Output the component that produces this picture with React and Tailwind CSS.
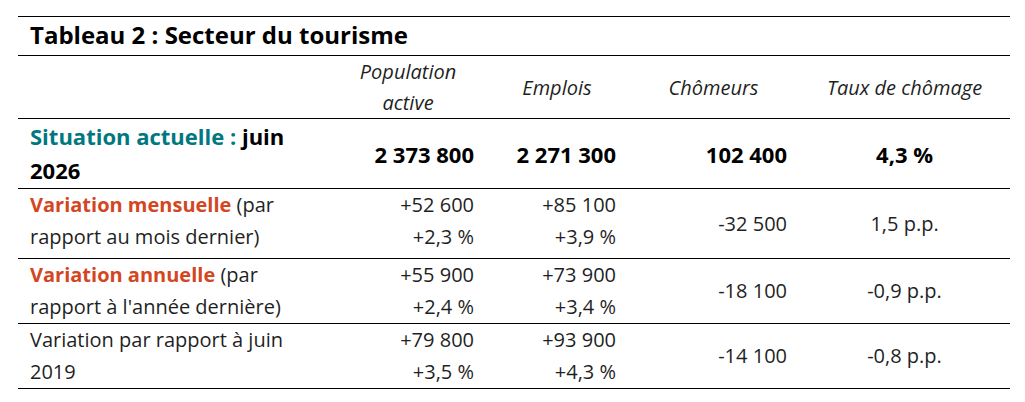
import React from "react";

const TEAL = "text-[#00787f]";
const RED = "text-[#d3461f]";

const ROWS = [
    {
        label: (
            <>
                <span className={`font-bold ${RED}`}>Variation mensuelle</span> (par rapport au mois dernier)
            </>
        ),
        pop: ["+52 600", "+2,3 %"],
        emp: ["+85 100", "+3,9 %"],
        chom: "-32 500",
        taux: "1,5 p.p.",
        pad: "pt-0 pb-[5px]",
    },
    {
        label: (
            <>
                <span className={`font-bold ${RED}`}>Variation annuelle</span> (par rapport à l'année dernière)
            </>
        ),
        pop: ["+55 900", "+2,4 %"],
        emp: ["+73 900", "+3,4 %"],
        chom: "-18 100",
        taux: "-0,9 p.p.",
        pad: "py-0",
    },
    {
        label: <>Variation par rapport à juin 2019</>,
        pop: ["+79 800", "+3,5 %"],
        emp: ["+93 900", "+4,3 %"],
        chom: "-14 100",
        taux: "-0,8 p.p.",
        pad: "py-0",
    },
];

const Head = ({ children }) => (
    <th className="px-3 py-0 font-normal italic text-center align-middle">{children}</th>
);

export default function App() {
    return (
        <div className="bg-white w-[1025px] h-[402px] pt-4 pl-[18px]" style={{ fontFamily: '"Open Sans", "Liberation Sans", sans-serif' }}>
            <table className="w-[992px] table-fixed border-collapse text-[20px] leading-[32px] text-[#1f1f1f]">
                <colgroup>
                    <col className="w-[312px]" />
                    <col className="w-[156px]" />
                    <col className="w-[142px]" />
                    <col className="w-[171px]" />
                    <col className="w-[211px]" />
                </colgroup>
                <thead>
                    <tr className="border-t border-b border-black">
                        <th colSpan={5} className="text-left px-3 pt-0 pb-[3px] h-[38px] text-[24px] font-bold text-black leading-[35px]">
                            Tableau 2 : Secteur du tourisme
                        </th>
                    </tr>
                    <tr className="border-b border-black leading-[31px]">
                        <th className="h-[62px] p-0"></th>
                        <Head>Population active</Head>
                        <Head>Emplois</Head>
                        <Head>Chômeurs</Head>
                        <Head>Taux de chômage</Head>
                    </tr>
                </thead>
                <tbody>
                    <tr className="border-b border-black text-[22px] font-bold text-black">
                        <td className="px-3 pt-0 pb-[1px] leading-[34px] text-left">
                            <span className={TEAL}>Situation actuelle :</span> juin 2026
                        </td>
                        <td className="px-3 text-right">2 373 800</td>
                        <td className="px-3 text-right">2 271 300</td>
                        <td className="px-3 text-right">102 400</td>
                        <td className="px-3 text-center">4,3 %</td>
                    </tr>
                    {ROWS.map((r, i) => (
                        <tr key={i} className="border-b border-black">
                            <td className={`px-3 ${r.pad} text-left`}>{r.label}</td>
                            <td className={`px-3 ${r.pad} text-right`}>
                                <div>{r.pop[0]}</div>
                                <div>{r.pop[1]}</div>
                            </td>
                            <td className={`px-3 ${r.pad} text-right`}>
                                <div>{r.emp[0]}</div>
                                <div>{r.emp[1]}</div>
                            </td>
                            <td className="px-3 text-right align-middle">{r.chom}</td>
                            <td className="px-3 text-center align-middle">{r.taux}</td>
                        </tr>
                    ))}
                </tbody>
            </table>
        </div>
    );
}
